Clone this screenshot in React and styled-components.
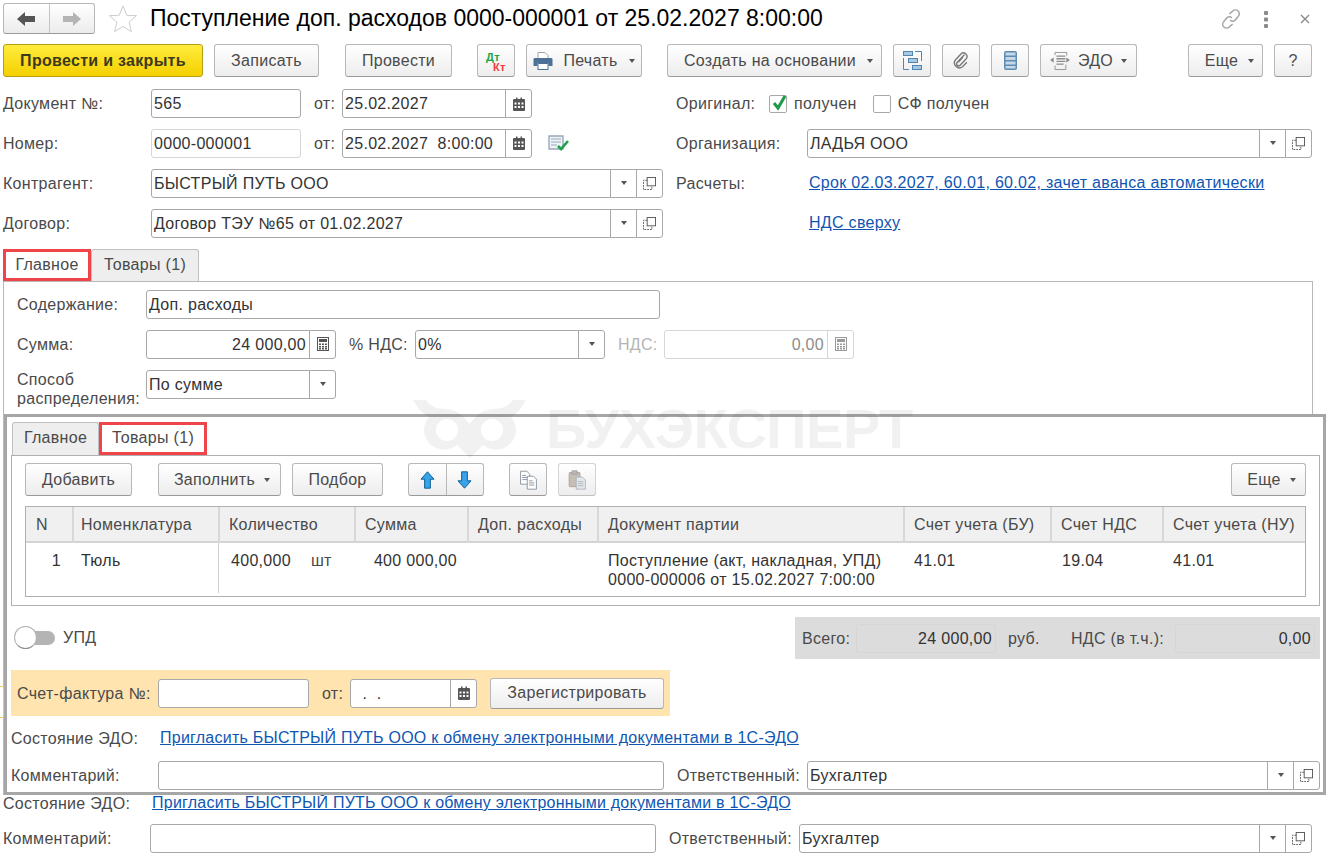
import React from "react"
import styled, {createGlobalStyle} from "styled-components"

const Global = createGlobalStyle`
  html, body { margin: 0; padding: 0; background: #fff; }
  body { font-family: "Liberation Sans", Arial, sans-serif; font-size: 16px; letter-spacing: 0.3px; color: #4a4a4a; }
  * { box-sizing: border-box; }
`

const Page = styled.div`
  position: relative;
  width: 1326px;
  height: 858px;
  overflow: hidden;
  padding: 3px 0 0 3px;
`
const Header = styled.div`
  display: flex;
  align-items: center;
  height: 31px;
  padding-right: 16px;
`
const NavGroup = styled.div`
  display: flex;
  width: 92px;
  height: 31px;
  border: 1px solid #b8b8b8;
  border-bottom-color: #9a9a9a;
  border-radius: 3px;
  background: linear-gradient(#fff, #ececec);
`
const NavCell = styled.div`
  flex: 1;
  display: flex;
  align-items: center;
  justify-content: center;
  & + & { border-left: 1px solid #c4c4c4; }
`
const Title = styled.div`
  margin-left: 12px;
  font-size: 23px;
  letter-spacing: 0;
  color: #000;
  white-space: nowrap;
`
const HeadIcons = styled.div`
  margin-left: auto;
  display: flex;
  align-items: center;
`
const HeadIcon = styled.span`
  display: flex;
  margin-left: ${p => p.$ml || 0}px;
`
const Toolbar = styled.div`
  display: flex;
  align-items: stretch;
  height: 33px;
  margin-top: ${p => p.$mt || 0}px;
`
const Button = styled.div`
  display: flex;
  align-items: center;
  justify-content: center;
  gap: ${p => p.$gap || 0}px;
  width: ${p => p.$w}px;
  margin-left: ${p => p.$ml || 0}px;
  padding-left: ${p => p.$pl || 0}px;
  height: ${p => p.$h || 33}px;
  border: 1px solid ${p => (p.$off ? "#d4d4d4" : "#b8b8b8")};
  border-bottom-color: ${p => (p.$off ? "#c0c0c0" : "#9a9a9a")};
  border-radius: 3px;
  background: linear-gradient(#fff, #ededed);
  color: #4a4a4a;
  white-space: nowrap;
  flex: none;
`
const Primary = styled(Button)`
  background: linear-gradient(#ffec3d, #f4d000);
  border-color: #b99e12;
  color: #3d3a1c;
  font-weight: 700;
`
const Caret = styled.span`
  display: inline-block;
  width: 0;
  height: 0;
  margin-left: ${p => p.$ml || 0}px;
  border-left: 3.5px solid transparent;
  border-right: 3.5px solid transparent;
  border-top: 4px solid #555;
  flex: none;
`
const SplitButton = styled(Button)`
  padding: 0;
  justify-content: stretch;
`
const SplitCell = styled.div`
  flex: 1;
  height: 100%;
  display: flex;
  align-items: center;
  justify-content: center;
  & + & { border-left: 1px solid #b8b8b8; }
`
const Rows = styled.div`
  margin-top: 7px;
`
const Row = styled.div`
  display: flex;
  align-items: center;
  height: ${p => p.$h || 40}px;
  margin-left: ${p => p.$ml || 0}px;
  margin-top: ${p => p.$mt || 0}px;
`
const Label = styled.div`
  flex: none;
  width: ${p => p.$w}px;
  margin-left: ${p => p.$ml || 0}px;
  margin-top: ${p => p.$mt || 0}px;
  color: ${p => (p.$off ? "#b4b4b4" : "#4a4a4a")};
  white-space: nowrap;
  line-height: 19px;
`
const Field = styled.div`
  flex: none;
  display: flex;
  align-items: stretch;
  width: ${p => p.$w}px;
  height: 29px;
  border: 1px solid ${p => (p.$off ? "#d6d6d6" : "#a8a8a8")};
  border-radius: 3px;
  background: #fff;
  color: #333;
`
const Value = styled.div`
  flex: 1;
  min-width: 0;
  padding: 0 ${p => (p.$right ? 3 : 2)}px;
  line-height: 27px;
  text-align: ${p => (p.$right ? "right" : "left")};
  color: ${p => (p.$off ? "#8c8c8c" : "#333")};
  white-space: pre;
`
const Addon = styled.div`
  flex: none;
  width: ${p => p.$w || 26}px;
  display: flex;
  align-items: center;
  justify-content: center;
  border-left: 1px solid ${p => (p.$off ? "#d6d6d6" : "#a8a8a8")};
`
const Link = styled.a`
  color: #0f56b3;
  text-decoration: underline;
  white-space: nowrap;
  margin-left: ${p => p.$ml || 0}px;
  letter-spacing: ${p => (p.$tight ? 0.24 : 0.3)}px;
`
const Check = styled.div`
  flex: none;
  width: 18px;
  height: 18px;
  margin-left: ${p => p.$ml || 0}px;
  margin-right: 7px;
  border: 1px solid #a8a8a8;
  border-radius: 2px;
  position: relative;
`
const CheckMark = styled.svg`
  position: absolute;
  left: 1px;
  top: -3px;
`
const Tabs = styled.div`
  display: flex;
  height: ${p => p.$h}px;
  margin-top: ${p => p.$mt || 0}px;
  margin-left: ${p => p.$ml || 0}px;
`
const Tab = styled.div`
  width: ${p => p.$w}px;
  text-align: center;
  line-height: ${p => p.$lh}px;
  height: ${p => p.$h}px;
  color: #4a4a4a;
  border: ${p => (p.$red ? "3px solid #f0444b" : "1px solid #c0c0c0")};
  border-bottom: ${p => (p.$red ? "3px solid #f0444b" : "none")};
  background: ${p => (p.$red ? "#fff" : "#eeeeee")};
  border-radius: ${p => (p.$red ? 0 : "3px 3px 0 0")};
  white-space: nowrap;
`
const Panel = styled.div`
  width: 1310px;
  height: 514px;
  border: 1px solid #b8b8b8;
  padding: 2px 0 0 13px;
`
const Overlay = styled.div`
  position: absolute;
  left: 4px;
  top: 414px;
  width: 1322px;
  height: 381px;
  border: 3px solid #a6a6a6;
  background: #fff;
  padding: 5px 3px 0 4px;
`
const InnerPanel = styled.div`
  width: 1309px;
  height: 151px;
  border: 1px solid #b0b0b0;
  padding: 7px 13px 0 13px;
`
const Eshe = styled(Button)`
  margin-left: auto;
`
const Table = styled.div`
  margin-top: 10px;
  width: 1281px;
  height: 91px;
  border: 1px solid #b0b0b0;
`
const TRow = styled.div`
  display: grid;
  grid-template-columns: 46px 146px 136px 113px 130px 306px 147px 112px 1fr;
  height: ${p => p.$h}px;
  background: ${p => p.$bg || "transparent"};
  border-bottom: ${p => (p.$head ? "2px solid #d4d4d4" : "none")};
`
const HeadCell = styled.div`
  padding-left: ${p => p.$pl || 9}px;
  line-height: 36px;
  color: #4a4a4a;
  white-space: nowrap;
  & + & { border-left: 2px solid #d8d8d8; }
`
const Cell = styled.div`
  display: flex;
  justify-content: ${p => (p.$right ? "flex-end" : "flex-start")};
  gap: 20px;
  padding: 8px ${p => p.$pr || 0}px 0 ${p => p.$pl || 11}px;
  line-height: 19px;
  color: #333;
  white-space: pre;
  border-left: ${p => (p.$line ? "1px solid #d0d0d0" : "none")};
`
const Unit = styled.span`
  color: #4a4a4a;
`
const BottomRow = styled.div`
  display: flex;
  align-items: center;
  justify-content: space-between;
  height: 42px;
  margin-top: 11px;
  padding: 0 0 0 2px;
`
const Toggle = styled.div`
  display: flex;
  align-items: center;
`
const Track = styled.div`
  position: relative;
  width: 38px;
  height: 14px;
  margin-left: 4px;
  border-radius: 7px;
  background: #b4b4b4;
`
const Knob = styled.div`
  position: absolute;
  left: -3px;
  top: -5px;
  width: 23px;
  height: 23px;
  border-radius: 50%;
  background: #fff;
  border: 1px solid #b0b0b0;
  border-bottom-color: #8f8f8f;
`
const ToggleText = styled.span`
  margin-left: 8px;
`
const Totals = styled.div`
  display: flex;
  align-items: center;
  width: 525px;
  height: 42px;
  background: #dcdcdc;
  padding-left: 7px;
`
const TotalBox = styled.div`
  flex: none;
  width: 140px;
  height: 29px;
  margin-left: ${p => p.$ml || 0}px;
  border: 1px solid #d6d6d6;
  border-radius: 3px;
  padding-right: 3px;
  line-height: 27px;
  text-align: right;
  color: #333;
`
const Band = styled.div`
  display: flex;
  align-items: center;
  width: 659px;
  height: 46px;
  margin-top: 11px;
  background: #ffe4b0;
  padding-left: 6px;
`
const Watermark = styled.div`
  position: absolute;
  left: 412px;
  top: 398px;
  display: flex;
  align-items: center;
  gap: 20px;
  pointer-events: none;
  color: rgba(0, 0, 0, 0.055);
  font-weight: 700;
  font-size: 56px;
  letter-spacing: -0.5px;
  line-height: 60px;
`
const Sliver = styled.div`
  position: absolute;
  left: 0;
  top: 686px;
  width: 4px;
  height: 32px;
  border: 1px solid #f0c850;
  border-left: none;
  background: #fff;
`

const Back = ({color}) => (
  <svg width="20" height="16" viewBox="0 0 20 16">
    <path d="M1 8 L9 1 V5 H19 V11 H9 V15 Z" fill={color} />
  </svg>
)
const Forward = ({color}) => (
  <svg width="20" height="16" viewBox="0 0 20 16">
    <path d="M19 8 L11 1 V5 H1 V11 H11 V15 Z" fill={color} />
  </svg>
)
const Star = () => (
  <svg width="30" height="29" viewBox="0 0 32 31" style={{marginLeft: 13, flex: "none"}}>
    <path d="M16 2 L20 12 L30.5 12.5 L22.5 19.5 L25 29.5 L16 24 L7 29.5 L9.5 19.5 L1.5 12.5 L12 12 Z" fill="#fff" stroke="#c8c8c8" strokeWidth="1" />
  </svg>
)
const ChainIcon = () => (
  <svg width="22" height="22" viewBox="0 0 20 20" fill="none" stroke="#a8a8a8" strokeWidth="1.4">
    <path d="M8.5 5.5 L11.5 2.8 a3.4 3.4 0 0 1 5 5 L13.8 11 a3.4 3.4 0 0 1 -4.6 0" />
    <path d="M11.5 14.5 L8.5 17.2 a3.4 3.4 0 0 1 -5 -5 L6.2 9 a3.4 3.4 0 0 1 4.6 0" />
  </svg>
)
const DotsIcon = () => (
  <svg width="6" height="18" viewBox="0 0 6 18" fill="#8a8a8a">
    <rect x="1" y="1" width="4" height="4" rx="1" />
    <rect x="1" y="7.5" width="4" height="4" rx="1" />
    <rect x="1" y="14" width="4" height="4" rx="1" />
  </svg>
)
const CloseIcon = () => (
  <svg width="10" height="10" viewBox="0 0 10 10" stroke="#8a8a8a" strokeWidth="1.4">
    <path d="M1 1 L9 9 M9 1 L1 9" />
  </svg>
)
const DtKt = () => (
  <svg width="24" height="24" viewBox="0 0 24 24">
    <text x="2" y="12" fontSize="11" fontWeight="700" letterSpacing="0.4" fontFamily="Liberation Sans" fill="#18a34a">Дт</text>
    <text x="9" y="22" fontSize="11" fontWeight="700" letterSpacing="0.4" fontFamily="Liberation Sans" fill="#ef3b3b">Кт</text>
  </svg>
)
const Printer = () => (
  <svg width="20" height="18" viewBox="0 0 20 18">
    <path d="M5 0.5 H12 L15 3.5 V7 H5 Z" fill="#fff" stroke="#9aa5b0" />
    <path d="M0.5 7 Q0.5 6 2 6 H18 Q19.5 6 19.5 7 V14 H15.5 V11 H4.5 V14 H0.5 Z" fill="#4d7196" />
    <rect x="5" y="11.5" width="10" height="6" fill="#fff" stroke="#4d7196" />
  </svg>
)
const TreeIcon = () => (
  <svg width="19" height="19" viewBox="0 0 19 19">
    <g fill="#a8c8e0" stroke="#4f86b3">
      <rect x="0.5" y="0.5" width="9" height="4" />
      <rect x="5.5" y="7.5" width="9" height="4" />
      <rect x="9.5" y="14.5" width="9" height="4" />
    </g>
    <path d="M12 0.5 H18.5 V10 M0.5 7 V18.5 H6" fill="none" stroke="#4f86b3" />
  </svg>
)
const ClipIcon = () => (
  <svg width="16" height="17" viewBox="0 0 20 22" fill="none" stroke="#7a7a7a" strokeWidth="1.8" strokeLinecap="round">
    <path d="M14 4 L5 13.5 a2.6 2.6 0 0 0 3.8 3.6 L16.5 9 a4.6 4.6 0 0 0 -6.6 -6.4 L3 10 a6.4 6.4 0 0 0 9 9 l5 -5" />
    <path d="M12 7 L7 12.5" />
  </svg>
)
const StackIcon = () => (
  <svg width="13" height="19" viewBox="0 0 13 19">
    <rect x="0" y="0" width="13" height="19" rx="2" fill="#5f8bb0" />
    <g fill="#c4d8e8">
      <rect x="1.5" y="1.5" width="10" height="3" />
      <rect x="1.5" y="6" width="10" height="3" />
      <rect x="1.5" y="10.5" width="10" height="3" />
      <rect x="1.5" y="15" width="10" height="2.5" />
    </g>
  </svg>
)
const EdoIcon = () => (
  <svg width="20" height="18" viewBox="0 0 22 20" fill="none" stroke="#8c8c8c">
    <path d="M5.5 3.5 V0.5 H18.5 V4 M5.5 15 V19.5 H17.5 V14" />
    <path d="M7 4.5 H17 M7 7.5 H17 M7 10.5 H17 M7 13.5 H15" strokeWidth="1.4" />
    <path d="M0 9 L4 6 V12 Z M22 9 L18 6 V12 Z" fill="#8c8c8c" stroke="none" />
  </svg>
)
const ArrowUp = () => (
  <svg width="15" height="18" viewBox="0 0 18 22">
    <path d="M9 1 L17 10 H12.5 V21 H5.5 V10 H1 Z" fill="#38a3e8" stroke="#0b5f93" strokeWidth="1.2" />
  </svg>
)
const ArrowDown = () => (
  <svg width="15" height="18" viewBox="0 0 18 22">
    <path d="M9 21 L17 12 H12.5 V1 H5.5 V12 H1 Z" fill="#38a3e8" stroke="#0b5f93" strokeWidth="1.2" />
  </svg>
)
const CopyIcon = () => (
  <svg width="19" height="20" viewBox="0 0 22 24">
    <path d="M1.5 1.5 H9 L12.5 5 V17 H1.5 Z" fill="#fff" stroke="#7d8894" />
    <path d="M3.5 6.5 H8 M3.5 9 H10 M3.5 11.5 H10" stroke="#7d8894" />
    <path d="M9.5 7.5 H17 L20.5 11 V23 H9.5 Z" fill="#fff" stroke="#7d8894" />
    <path d="M11.5 13 H16 M11.5 15.5 H18 M11.5 18 H18" stroke="#7d8894" />
  </svg>
)
const PasteIcon = () => (
  <svg width="19" height="20" viewBox="0 0 22 24">
    <rect x="1" y="3" width="13" height="17" rx="1" fill="#c6bdb4" stroke="#a89d92" />
    <rect x="4.5" y="1" width="6" height="4" fill="#b8b8b8" stroke="#a0a0a0" />
    <path d="M9.5 8.5 H17 L20.5 12 V23 H9.5 Z" fill="#e4e8ec" stroke="#a8b0b8" />
    <path d="M11.5 14 H18 M11.5 16.5 H18 M11.5 19 H18" stroke="#a8b0b8" />
  </svg>
)
const CalendarIcon = () => (
  <svg width="12" height="14" viewBox="0 0 12 14">
    <path d="M1 2 H3 V0.5 H4.5 V2 H7.5 V0.5 H9 V2 H11 Q12 2 12 3 V13 Q12 14 11 14 H1 Q0 14 0 13 V3 Q0 2 1 2 Z" fill="#555" />
    <g fill="#fff">
      <rect x="1.5" y="5.5" width="2" height="2" />
      <rect x="5" y="5.5" width="2" height="2" />
      <rect x="8.5" y="5.5" width="2" height="2" />
      <rect x="1.5" y="9" width="2" height="2" />
      <rect x="5" y="9" width="2" height="2" />
      <rect x="8.5" y="9" width="2" height="2" />
    </g>
  </svg>
)
const CalcIcon = ({color = "#555"}) => (
  <svg width="12" height="14" viewBox="0 0 12 14">
    <rect x="0.5" y="0.5" width="11" height="13" fill="#fff" stroke={color} />
    <rect x="2" y="2" width="8" height="3" fill={color} />
    <g fill={color}>
      <rect x="2" y="6.5" width="2" height="1.5" />
      <rect x="5" y="6.5" width="2" height="1.5" />
      <rect x="8" y="6.5" width="2" height="1.5" />
      <rect x="2" y="9" width="2" height="1.5" />
      <rect x="5" y="9" width="2" height="1.5" />
      <rect x="8" y="9" width="2" height="1.5" />
      <rect x="2" y="11" width="2" height="1.5" />
      <rect x="5" y="11" width="2" height="1.5" />
      <rect x="8" y="11" width="2" height="1.5" />
    </g>
  </svg>
)
const OpenIcon = () => (
  <svg width="13" height="13" viewBox="0 0 14 14" fill="none" stroke="#555">
    <rect x="4.5" y="0.5" width="9" height="9" />
    <path d="M4.5 3.5 H0.5 V13.5 H9.5 V9.5" strokeDasharray="2 1" />
  </svg>
)
const RegisterIcon = () => (
  <svg width="22" height="16" viewBox="0 0 22 16" style={{marginLeft: 16, flex: "none"}}>
    <path d="M1 1 H15 V14 H1 Z" fill="#eef3f6" stroke="#9aa8b8" strokeWidth="1.4" />
    <path d="M3 4 H13 M3 7 H13 M3 10 H9" stroke="#9aa8b8" />
    <path d="M10 11 L13 14 L20 6" fill="none" stroke="#1fa04a" strokeWidth="2.6" />
  </svg>
)
const OwlMark = () => (
  <svg width="114" height="62" viewBox="0 0 114 62">
    <g opacity="0.055">
      <path
        d="M1 2 H14 Q20 11 33 11 Q47 11 57.500 26 Q68 11 82 11 Q95 11 101 2 H114 Q108 14 99 19 Q104 25 104 32 A20 20 0 0 1 71 47 L58 60 L45 47 A20 20 0 0 1 12 32 Q12 25 17 19 Q7 14 1 2 Z"
        fill="#000"
      />
    </g>
    <circle cx="35" cy="32" r="11" fill="#fff" />
    <circle cx="80" cy="32" r="11" fill="#fff" />
  </svg>
)

const DateField = ({value, w = 190}) => (
  <Field $w={w}>
    <Value>{value}</Value>
    <Addon><CalendarIcon /></Addon>
  </Field>
)
const Combo = ({value, w, open = true}) => (
  <Field $w={w}>
    <Value>{value}</Value>
    <Addon><Caret /></Addon>
    {open && <Addon><OpenIcon /></Addon>}
  </Field>
)

const columns = [
  ["N", 10],
  ["Номенклатура", 7],
  ["Количество"],
  ["Сумма"],
  ["Доп. расходы"],
  ["Документ партии"],
  ["Счет учета (БУ)"],
  ["Счет НДС"],
  ["Счет учета (НУ)"],
]

const inviteText = "Пригласить БЫСТРЫЙ ПУТЬ ООО к обмену электронными документами в 1С-ЭДО"

export default function App() {
  return (
    <Page>
      <Global />
      <Header>
        <NavGroup>
          <NavCell><Back color="#555" /></NavCell>
          <NavCell><Forward color="#b4b4b4" /></NavCell>
        </NavGroup>
        <Star />
        <Title>Поступление доп. расходов 0000-000001 от 25.02.2027 8:00:00</Title>
        <HeadIcons>
          <HeadIcon><ChainIcon /></HeadIcon>
          <HeadIcon $ml={21}><DotsIcon /></HeadIcon>
          <HeadIcon $ml={31}><CloseIcon /></HeadIcon>
        </HeadIcons>
      </Header>

      <Toolbar $mt={10}>
        <Primary $w={200}>Провести и закрыть</Primary>
        <Button $w={105} $ml={11}>Записать</Button>
        <Button $w={107} $ml={26}>Провести</Button>
        <Button $w={38} $ml={25}><DtKt /></Button>
        <Button $w={116} $ml={11} $gap={10}><Printer />Печать<Caret $ml={1} /></Button>
        <Button $w={215} $ml={25} $gap={8} $pl={8}>Создать на основании<Caret $ml={3} /></Button>
        <Button $w={38} $ml={11}><TreeIcon /></Button>
        <Button $w={38} $ml={11}><ClipIcon /></Button>
        <Button $w={38} $ml={11}><StackIcon /></Button>
        <Button $w={97} $ml={11} $gap={8}><EdoIcon />ЭДО<Caret /></Button>
        <Button $w={75} $ml={51} $gap={8} $pl={8}>Еще<Caret $ml={2} /></Button>
        <Button $w={38} $ml={11}>?</Button>
      </Toolbar>

      <Rows>
        <Row $h={39}>
          <Label $w={148}>Документ №:</Label>
          <Field $w={150}><Value>565</Value></Field>
          <Label $w={28} $ml={13}>от:</Label>
          <DateField value="25.02.2027" />
          <Label $w={93} $ml={144}>Оригинал:</Label>
          <Check>
            <CheckMark width="17" height="20" viewBox="0 0 17 20">
              <path d="M3 10 L7 15 L14 3" fill="none" stroke="#1c9a48" strokeWidth="3" />
            </CheckMark>
          </Check>
          <span>получен</span>
          <Check $ml={16} />
          <span>СФ получен</span>
        </Row>
        <Row>
          <Label $w={148}>Номер:</Label>
          <Field $w={150} $off><Value>0000-000001</Value></Field>
          <Label $w={28} $ml={13}>от:</Label>
          <DateField value="25.02.2027  8:00:00" />
          <RegisterIcon />
          <Label $w={131} $ml={106}>Организация:</Label>
          <Combo value="ЛАДЬЯ ООО" w={505} />
        </Row>
        <Row>
          <Label $w={148}>Контрагент:</Label>
          <Combo value="БЫСТРЫЙ ПУТЬ ООО" w={512} />
          <Label $w={133} $ml={13}>Расчеты:</Label>
          <Link>Срок 02.03.2027, 60.01, 60.02, зачет аванса автоматически</Link>
        </Row>
        <Row>
          <Label $w={148}>Договор:</Label>
          <Combo value="Договор ТЭУ №65 от 01.02.2027" w={512} />
          <Link $ml={146}>НДС сверху</Link>
        </Row>
      </Rows>

      <Tabs $h={32} $mt={6}>
        <Tab $w={88} $h={32} $lh={26} $red>Главное</Tab>
        <Tab $w={108} $h={32} $lh={30}>Товары (1)</Tab>
      </Tabs>
      <Panel>
        <Row>
          <Label $w={129}>Содержание:</Label>
          <Field $w={514}><Value>Доп. расходы</Value></Field>
        </Row>
        <Row>
          <Label $w={129}>Сумма:</Label>
          <Field $w={190}>
            <Value $right>24 000,00</Value>
            <Addon><CalcIcon /></Addon>
          </Field>
          <Label $w={66} $ml={13}>% НДС:</Label>
          <Combo value="0%" w={190} open={false} />
          <Label $w={46} $ml={13} $off>НДС:</Label>
          <Field $w={190} $off>
            <Value $right $off>0,00</Value>
            <Addon $off><CalcIcon color="#9a9a9a" /></Addon>
          </Field>
        </Row>
        <Row>
          <Label $w={129} $mt={10}>Способ<br />распределения:</Label>
          <Combo value="По сумме" w={190} open={false} />
        </Row>
      </Panel>

      <Row $h={16}>
        <Label $w={149}>Состояние ЭДО:</Label>
        <Link $tight>{inviteText}</Link>
      </Row>
      <Row $h={30} $mt={12}>
        <Label $w={147}>Комментарий:</Label>
        <Field $w={506} />
        <Label $w={130} $ml={13}>Ответственный:</Label>
        <Combo value="Бухгалтер" w={513} />
      </Row>

      <Sliver />

      <Overlay>
        <Tabs $h={33} $ml={1}>
          <Tab $w={87} $h={33} $lh={29}>Главное</Tab>
          <Tab $w={108} $h={33} $lh={25} $red>Товары (1)</Tab>
        </Tabs>
        <InnerPanel>
          <Toolbar>
            <Button $w={107}>Добавить</Button>
            <Button $w={123} $ml={26} $gap={7} $pl={5}>Заполнить<Caret $ml={2} /></Button>
            <Button $w={91} $ml={11}>Подбор</Button>
            <SplitButton $w={76} $ml={25}>
              <SplitCell><ArrowUp /></SplitCell>
              <SplitCell><ArrowDown /></SplitCell>
            </SplitButton>
            <Button $w={38} $ml={25}><CopyIcon /></Button>
            <Button $w={38} $ml={11} $off><PasteIcon /></Button>
            <Eshe $w={75} $gap={7} $pl={6}>Еще<Caret $ml={2} /></Eshe>
          </Toolbar>
          <Table>
            <TRow $h={36} $bg="#f0f0f0" $head>
              {columns.map(([name, pl]) => (
                <HeadCell key={name} $pl={pl}>{name}</HeadCell>
              ))}
            </TRow>
            <TRow $h={50}>
              <Cell $right $pr={11}>1</Cell>
              <Cell $pl={9}>Тюль</Cell>
              <Cell $pl={12} $line>400,000<Unit>шт</Unit></Cell>
              <Cell $right $pr={10}>400 000,00</Cell>
              <Cell />
              <Cell>Поступление (акт, накладная, УПД){"\n"}0000-000006 от 15.02.2027 7:00:00</Cell>
              <Cell>41.01</Cell>
              <Cell $pl={12}>19.04</Cell>
              <Cell>41.01</Cell>
            </TRow>
          </Table>
        </InnerPanel>

        <BottomRow>
          <Toggle>
            <Track><Knob /></Track>
            <ToggleText>УПД</ToggleText>
          </Toggle>
          <Totals>
            <Label $w={54}>Всего:</Label>
            <TotalBox>24 000,00</TotalBox>
            <Label $w={50} $ml={12}>руб.</Label>
            <Label $w={104} $ml={13}>НДС (в т.ч.):</Label>
            <TotalBox>0,00</TotalBox>
          </Totals>
        </BottomRow>

        <Band>
          <Label $w={141}>Счет-фактура №:</Label>
          <Field $w={151} />
          <Label $w={28} $ml={13}>от:</Label>
          <DateField value="  .  ." w={127} />
          <Button $w={174} $ml={13} $h={31}>Зарегистрировать</Button>
        </Band>

        <Row $h={44}>
          <Label $w={149}>Состояние ЭДО:</Label>
          <Link $tight>{inviteText}</Link>
        </Row>
        <Row $h={30}>
          <Label $w={147}>Комментарий:</Label>
          <Field $w={506} />
          <Label $w={130} $ml={13}>Ответственный:</Label>
          <Combo value="Бухгалтер" w={513} />
        </Row>
      </Overlay>

      <Watermark>
        <OwlMark />
        <span>БУХЭКСПЕРТ</span>
      </Watermark>
    </Page>
  )
}
